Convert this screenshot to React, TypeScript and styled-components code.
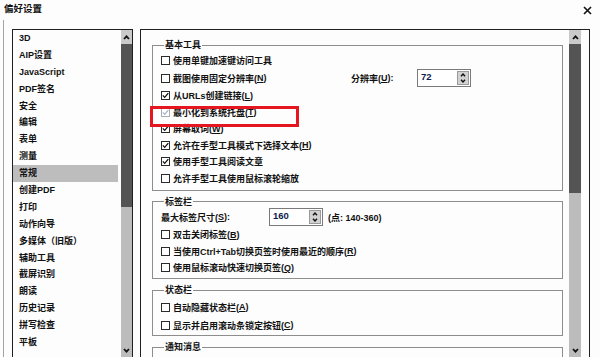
import React from 'react';
import styled, { createGlobalStyle } from 'styled-components';

const GlobalStyle = createGlobalStyle`
  html, body {
    margin: 0;
    padding: 0;
    background: #fdfdfd;
  }
  body {
    font-family: "Liberation Sans", "Noto Sans CJK SC", sans-serif;
    color: #111;
  }
`;

const Window = styled.div`
  position: relative;
  width: 600px;
  height: 357px;
  overflow: hidden;
  background: #fdfdfd;
  display: flex;
  flex-direction: column;
`;

const TitleBar = styled.div`
  height: 20px;
  flex: none;
  box-sizing: border-box;
  padding: 3px 8px 0 4px;
  display: flex;
  align-items: flex-start;
  justify-content: space-between;
`;

const Title = styled.span`
  font-size: 9.5px;
  line-height: 12px;
  font-weight: 700;
`;

const Body = styled.div`
  flex: 1;
  min-height: 0;
  margin-left: 3px;
  border-left: 1px solid #a3a3a3;
  padding: 9px 0 0 8px;
  display: flex;
  gap: 7px;
`;

const ListPanel = styled.div`
  width: 121px;
  flex: none;
  box-sizing: border-box;
  border: 1px solid #202020;
  border-bottom: none;
  display: flex;
`;

const ItemList = styled.div`
  flex: 1;
  margin-right: 3px;
  display: flex;
  flex-direction: column;
`;

const Item = styled.div<{ $selected?: boolean }>`
  height: 16.9px;
  line-height: 16.9px;
  flex: none;
  padding-left: 6px;
  font-size: 9px;
  font-weight: 700;
  white-space: nowrap;
  background: ${p => (p.$selected ? '#bdbdbd' : 'transparent')};
`;

const Bar = styled.div<{ $w: number; $ml?: number; $mr?: number }>`
  width: ${p => p.$w}px;
  flex: none;
  margin-left: ${p => p.$ml ?? 0}px;
  margin-right: ${p => p.$mr ?? 0}px;
  display: flex;
  flex-direction: column;
  background: #bcbcbc;
`;

const BarButton = styled.div<{ $light?: boolean }>`
  height: 14px;
  flex: none;
  background: ${p => (p.$light ? '#cacaca' : '#bcbcbc')};
  display: flex;
  align-items: center;
  justify-content: center;
`;

const BarThumb = styled.div<{ $h: number }>`
  height: ${p => p.$h}px;
  flex: none;
  background: #545454;
`;

const BarTrack = styled.div`
  flex: 1;
`;

const ContentPanel = styled.div`
  width: 450px;
  flex: none;
  box-sizing: border-box;
  border: 1px solid #202020;
  border-bottom: none;
  display: flex;
`;

const Main = styled.div`
  flex: 1;
  padding: 9px 0 0 11px;
  display: flex;
  flex-direction: column;
  gap: 5px;
`;

const Group = styled.fieldset<{ $pt: number; $pb: number; $minH?: number }>`
  margin: 0;
  min-width: 0;
  width: 411px;
  flex: none;
  box-sizing: border-box;
  border: 1px solid #8d8d8d;
  padding: ${p => p.$pt}px 0 ${p => p.$pb}px 8px;
  min-height: ${p => p.$minH ?? 0}px;
`;

const Legend = styled.legend`
  margin-left: 3px;
  padding: 0 1px;
  font-size: 9px;
  line-height: 12px;
  font-weight: 700;
`;

const Row = styled.div<{ $h: number }>`
  height: ${p => p.$h}px;
  display: flex;
  align-items: center;
  font-size: 9px;
  font-weight: 700;
  white-space: nowrap;
`;

const Cell = styled.div<{ $w: number }>`
  width: ${p => p.$w}px;
  flex: none;
  display: flex;
  align-items: center;
`;

const Box = styled.span<{ $faded?: boolean }>`
  width: 9px;
  height: 9px;
  flex: none;
  box-sizing: border-box;
  margin-right: 3px;
  border: 1px solid ${p => (p.$faded ? '#a9adb5' : '#2a2a2a')};
  background: #fff;
  display: flex;
`;

const Key = styled.span`
  text-decoration: underline;
`;

const SpinField = styled.div`
  width: 54px;
  height: 18px;
  flex: none;
  box-sizing: border-box;
  border: 1px solid #7a7a7a;
  background: #fff;
  padding: 1px 1px 0 3px;
  display: flex;
  align-items: flex-start;
`;

const SpinValue = styled.span`
  flex: 1;
  font-size: 9.5px;
  line-height: 11px;
  font-weight: 700;
  color: #0d1b4d;
`;

const SpinButtons = styled.div`
  width: 12px;
  height: 14px;
  box-sizing: border-box;
  border: 1px solid #9a9a9a;
  background: #d2d2d2;
  display: flex;
  flex-direction: column;
  align-items: center;
  justify-content: space-around;
`;

const Hint = styled.span`
  margin-left: 5px;
`;

const Highlight = styled.div`
  position: absolute;
  left: 150px;
  top: 106px;
  width: 149px;
  height: 21px;
  box-sizing: border-box;
  border: 3px solid #e5161f;
`;

const Chevron = ({ up, w = 7, h = 5 }: { up?: boolean; w?: number; h?: number }) => (
  <svg width={w} height={h} viewBox="0 0 7 5">
    <polyline
      points={up ? '1,4 3.5,1.3 6,4' : '1,1 3.5,3.7 6,1'}
      fill="none"
      stroke="#111"
      strokeWidth="1.8"
    />
  </svg>
);

const Scrollbar = ({ width, thumb, ml, mr }: { width: number; thumb: number; ml?: number; mr?: number }) => (
  <Bar $w={width} $ml={ml} $mr={mr}>
    <BarButton $light>
      <Chevron up />
    </BarButton>
    <BarThumb $h={thumb} />
    <BarTrack />
    <BarButton>
      <Chevron />
    </BarButton>
  </Bar>
);

const CheckBox = ({ checked, faded }: { checked?: boolean; faded?: boolean }) => (
  <Box $faded={faded}>
    {checked && (
      <svg width="7" height="7" viewBox="0 0 7 7">
        <polyline
          points="0.8,3.4 2.7,5.4 6.3,1.2"
          fill="none"
          stroke={faded ? '#a9b2c4' : '#111'}
          strokeWidth="1.3"
        />
      </svg>
    )}
  </Box>
);

const SpinBox = ({ value }: { value: string }) => (
  <SpinField>
    <SpinValue>{value}</SpinValue>
    <SpinButtons>
      <Chevron up w={6} h={4} />
      <Chevron w={6} h={4} />
    </SpinButtons>
  </SpinField>
);

const categories = [
  '3D', 'AIP设置', 'JavaScript', 'PDF签名', '安全', '编辑', '表单', '测量', '常规',
  '创建PDF', '打印', '动作向导', '多媒体（旧版）', '辅助工具', '截屏识别', '朗读',
  '历史记录', '拼写检查', '平板',
];

export default function App() {
  return (
    <Window>
      <GlobalStyle />
      <TitleBar>
        <Title>偏好设置</Title>
        <svg width="9" height="9" viewBox="0 0 9 9" style={{ marginTop: 3 }}>
          <path d="M1 1 L8 8 M8 1 L1 8" stroke="#111" strokeWidth="1.6" />
        </svg>
      </TitleBar>
      <Body>
        <ListPanel>
          <ItemList>
            {categories.map(name => (
              <Item key={name} $selected={name === '常规'}>{name}</Item>
            ))}
          </ItemList>
          <Scrollbar width={11} thumb={163} />
        </ListPanel>
        <ContentPanel>
          <Main>
            <Group $pt={1} $pb={3}>
              <Legend>基本工具</Legend>
              <Row $h={16.5}><CheckBox />使用单键加速键访问工具</Row>
              <Row $h={19}>
                <Cell $w={190}><CheckBox />截图使用固定分辨率(<Key>N</Key>)</Cell>
                <Cell $w={66}>分辨率(<Key>U</Key>):</Cell>
                <SpinBox value="72" />
              </Row>
              <Row $h={16.5}><CheckBox checked />从URLs创建链接(<Key>L</Key>)</Row>
              <Row $h={16.5}><CheckBox checked faded />最小化到系统托盘(<Key>T</Key>)</Row>
              <Row $h={16.5}><CheckBox checked />屏幕取词(<Key>W</Key>)</Row>
              <Row $h={16.5}><CheckBox checked />允许在手型工具模式下选择文本(<Key>H</Key>)</Row>
              <Row $h={16.5}><CheckBox checked />使用手型工具阅读文章</Row>
              <Row $h={16.5}><CheckBox />允许手型工具使用鼠标滚轮缩放</Row>
            </Group>
            <Group $pt={0} $pb={2}>
              <Legend>标签栏</Legend>
              <Row $h={19}>
                <Cell $w={108}>最大标签尺寸(<Key>S</Key>):</Cell>
                <SpinBox value="160" />
                <Hint>(点: 140-360)</Hint>
              </Row>
              <Row $h={16.5}><CheckBox />双击关闭标签(<Key>B</Key>)</Row>
              <Row $h={16.5}><CheckBox />当使用Ctrl+Tab切换页签时使用最近的顺序(<Key>R</Key>)</Row>
              <Row $h={16.5}><CheckBox />使用鼠标滚动快速切换页签(<Key>Q</Key>)</Row>
            </Group>
            <Group $pt={2} $pb={1}>
              <Legend>状态栏</Legend>
              <Row $h={18}><CheckBox />自动隐藏状态栏(<Key>A</Key>)</Row>
              <Row $h={18}><CheckBox />显示并启用滚动条锁定按钮(<Key>C</Key>)</Row>
            </Group>
            <Group $pt={2} $pb={1} $minH={40}>
              <Legend>通知消息</Legend>
            </Group>
          </Main>
          <Scrollbar width={12} thumb={149} ml={6} mr={8} />
        </ContentPanel>
      </Body>
      <Highlight />
    </Window>
  );
}
